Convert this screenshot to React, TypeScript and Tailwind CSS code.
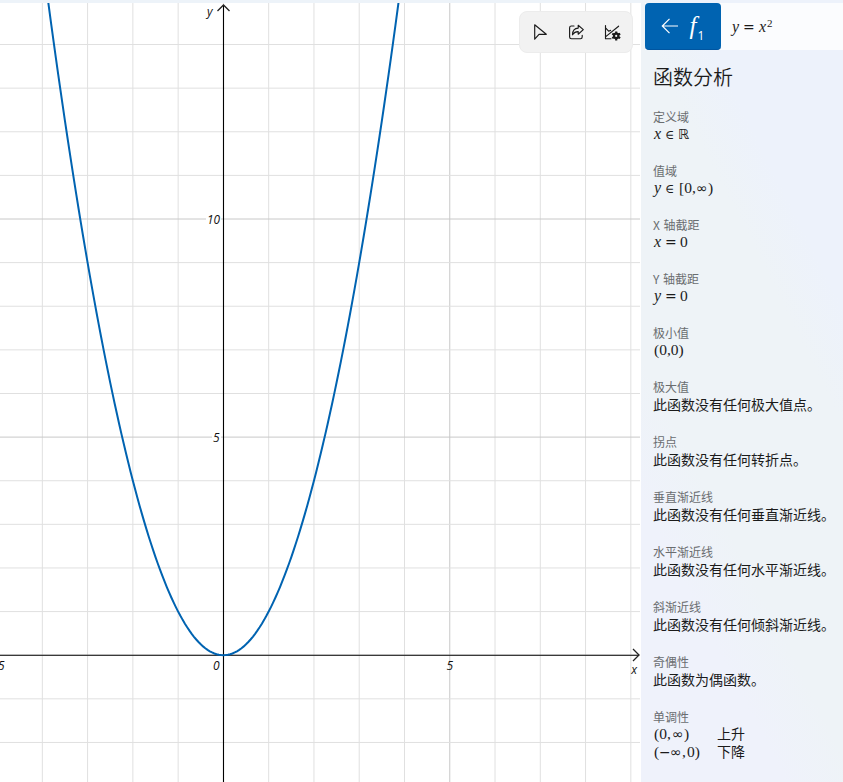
import React from "react";

type Token = { t: string; w: number; k?: "i" | "s" | "n" | "e" };

const X0 = 223.4;
const Y0 = 655.2;
const UX = 45.27;
const UY = 43.62;

const it = (t: string, w: number): Token => ({ t, w, k: "i" });
const sy = (t: string, w: number): Token => ({ t, w, k: "s" });
const nu = (t: string, w: number): Token => ({ t, w, k: "n" });
const el = (t: string, w: number): Token => ({ t, w, k: "e" });

const tokenClass = {
  i: "shrink-0 whitespace-nowrap font-['Liberation_Serif',serif] text-[16px] italic",
  s: "shrink-0 whitespace-nowrap font-['DejaVu_Sans','DejaVu_Serif',sans-serif] text-[14px]",
  e: "shrink-0 whitespace-nowrap font-['DejaVu_Serif','DejaVu_Sans',serif] text-[12.5px]",
  n: "shrink-0 whitespace-nowrap font-['Liberation_Serif',serif]",
};

function MathLine({ tokens }: { tokens: Token[] }) {
  return (
    <div className="flex h-[18px] items-baseline pl-px text-[15.5px] leading-[18px]">
      {tokens.map((k, i) => (
        <span key={i} style={{ width: k.w }} className={tokenClass[k.k ?? "n"]}>
          {k.t}
        </span>
      ))}
    </div>
  );
}

function Item({ label, text, math }: { label: string; text?: string; math?: Token[] }) {
  return (
    <div className="mb-5">
      <div className="h-4 whitespace-nowrap text-[12px] leading-4 text-[#6a6d70] [word-spacing:1px]">{label}</div>
      {math && <MathLine tokens={math} />}
      {text && <div className="h-[19px] whitespace-nowrap text-[14px] leading-[19px]">{text}</div>}
    </div>
  );
}

function Graph() {
  const cols = Array.from({ length: 14 }, (_, i) => i - 4);
  const rows = Array.from({ length: 17 }, (_, i) => i - 2);
  const pts = Array.from({ length: 161 }, (_, i) => {
    const x = -4 + i * 0.05;
    return `${(X0 + x * UX).toFixed(2)},${(Y0 - x * x * UY - 3).toFixed(2)}`;
  }).join(" ");
  return (
    <svg width="641" height="779" viewBox="0 0 641 779" className="block bg-white">
      {cols.map((c) => (
        <line key={c} x1={X0 + c * UX} x2={X0 + c * UX} y1="0" y2="779" stroke={c === 5 ? "#c8c8c8" : "#e0e0e0"} />
      ))}
      {rows.map((r) => (
        <line key={r} x1="0" x2="640" y1={Y0 - 3 - r * UY} y2={Y0 - 3 - r * UY} stroke={r === 5 || r === 10 ? "#c8c8c8" : "#e0e0e0"} />
      ))}
      <rect x="206" y="208" width="15" height="16" fill="#fff" />
      <rect x="212" y="426" width="9" height="16" fill="#fff" />
      <path d="M223.5 779V2M0 652.2H639" stroke="#000" strokeWidth="1.1" fill="none" />
      <path d="M217.5 8L223.5 2L229.5 8M633 646L639 652L633 658" stroke="#222" strokeWidth="1.3" fill="none" />
      <polyline points={pts} fill="none" stroke="#0063b1" strokeWidth="2" />
      <g className="font-['Open_Sans',sans-serif] text-[12px] italic" fill="#111">
        <text x="207" y="13">y</text>
        <text x="207" y="220.5" textLength="13" lengthAdjust="spacingAndGlyphs">10</text>
        <text x="213" y="438.5">5</text>
        <text x="213" y="667">0</text>
        <text x="446.5" y="667">5</text>
        <text x="-2" y="667">5</text>
        <text x="631.2" y="670.5">x</text>
      </g>
    </svg>
  );
}

function Toolbar() {
  return (
    <div className="absolute left-[519px] top-[11px] flex h-[42px] w-[114px] items-center rounded-lg border border-[#ececec] bg-[#f2f2f2]">
      <svg width="112" height="40" viewBox="520 12 112 40" fill="none" stroke="#1b1b1b" strokeWidth="1.15" strokeLinejoin="round" strokeLinecap="round">
        <path d="M534.7 24.8V39.2L539 34.3H546.3Z" />
        <path d="M574 26H571.4Q569.6 26 569.6 27.8V37Q569.6 38.7 571.4 38.7H580.5Q582.2 38.7 582.2 37V35.2" />
        <path d="M572.5 34.8C572.6 30.5 574.4 28.2 578.2 28.1V25.2L583.3 29.6L578.2 34.2V31.6C575.7 31.5 574 32.5 572.5 34.8Z" />
        <path d="M605.5 25.5V38.7H611M605.8 28.2L608.6 31.2L610.6 30.4M605.8 36.6L618.6 26.2" />
        <g fill="#1b1b1b" stroke="none">
          <circle cx="616.2" cy="35.9" r="3.3" />
          <path d="M615.1 31.4h2.2v9h-2.2zM611.7 34.6l1.1-1.9 7.9 4.5-1.1 1.9zM611.7 37.2l1.1 1.9 7.9-4.5-1.1-1.9z" />
        </g>
        <circle cx="616.2" cy="35.9" r="1.1" fill="#f2f2f2" stroke="none" />
      </svg>
    </div>
  );
}

export default function App() {
  return (
    <div className="relative flex h-[782px] w-[843px] overflow-hidden bg-[#edf3f9] font-['Noto_Sans_CJK_SC',sans-serif] text-[#1b1b1b]">
      <main className="w-[641px] shrink-0 pt-[3px]">
        <Graph />
      </main>
      <Toolbar />
      <aside className="w-[202px] shrink-0 bg-[linear-gradient(243deg,#edf2fb_0%,#edf2fb_26%,#eef3f7_36%,#eef3f7_64%,#eff2fb_76%,#eff2fb_100%)] pl-1 pt-[3px]">
        <div className="flex h-[47px] bg-[#fbfcfe]">
          <div className="h-[47px] w-[76px] shrink-0 rounded border-b border-[#0055a0] bg-[#0063b1]">
            <svg width="76" height="46" viewBox="645 3 76 46" fill="none" stroke="#fff" strokeWidth="1.2">
              <path d="M678 26H662.5M669.5 18.8L662.3 26L669.5 33.2" />
              <g fill="#fff" stroke="none">
                <text x="689.5" y="33.5" className="font-['Liberation_Serif',serif] text-[25px] italic">f</text>
                <text x="697.5" y="40" className="font-['Open_Sans',sans-serif] text-[12px]">1</text>
              </g>
            </svg>
          </div>
          <div className="flex flex-1 items-center pl-2.5">
            <MathLine tokens={[it("y", 11), sy("=", 16), it("x", 8)]} />
            <span className="-mt-2 font-['Liberation_Serif',serif] text-[11px] leading-3">2</span>
          </div>
        </div>
        <h1 className="ml-2 mt-3 h-[30px] whitespace-nowrap text-[20px] font-[350] leading-[30px]">函数分析</h1>
        <div className="ml-2 mt-[17px]">
          <Item label="定义域" math={[it("x", 11), el("∈", 13), sy("ℝ", 12)]} />
          <Item label="值域" math={[it("y", 11), el("∈", 14), nu("[0,", 17), sy("∞", 12), nu(")", 6)]} />
          <Item label="X 轴截距" math={[it("x", 11), sy("=", 15), nu("0", 8)]} />
          <Item label="Y 轴截距" math={[it("y", 11), sy("=", 15), nu("0", 8)]} />
          <Item label="极小值" math={[nu("(0,0)", 32)]} />
          <Item label="极大值" text="此函数没有任何极大值点。" />
          <Item label="拐点" text="此函数没有任何转折点。" />
          <Item label="垂直渐近线" text="此函数没有任何垂直渐近线。" />
          <Item label="水平渐近线" text="此函数没有任何水平渐近线。" />
          <Item label="斜渐近线" text="此函数没有任何倾斜渐近线。" />
          <Item label="奇偶性" text="此函数为偶函数。" />
          <div>
            <div className="h-4 text-[12px] leading-4 text-[#6a6d70]">单调性</div>
            <div className="flex h-[18px] text-[14px] leading-[17px]">
              <div className="w-16"><MathLine tokens={[nu("(0,", 18), sy("∞", 12), nu(")", 6)]} /></div>
              <span>上升</span>
            </div>
            <div className="flex h-[18px] text-[14px] leading-[17px]">
              <div className="w-16"><MathLine tokens={[nu("(", 5), sy("−", 11), sy("∞", 12), nu(",", 5), nu("0)", 13)]} /></div>
              <span>下降</span>
            </div>
          </div>
        </div>
      </aside>
    </div>
  );
}
